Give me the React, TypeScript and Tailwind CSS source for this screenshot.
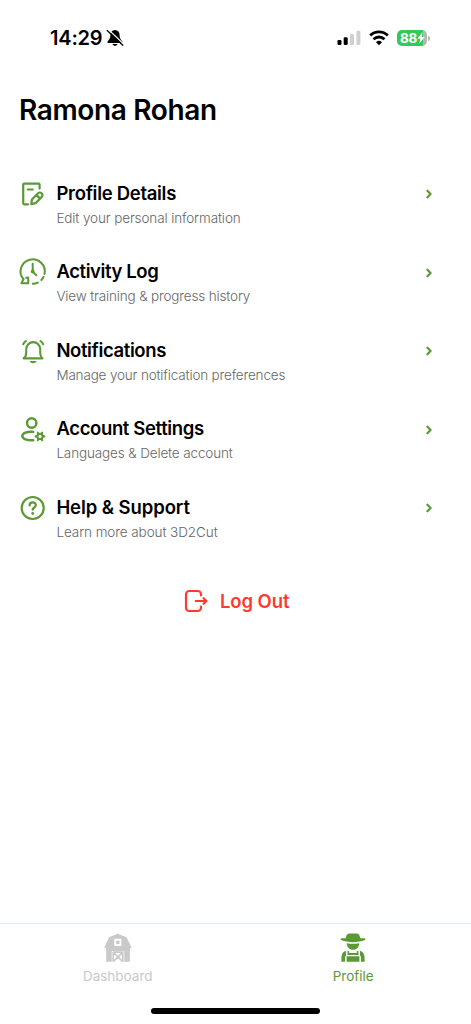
import React from 'react';

interface MenuItem {
  title: string;
  subtitle: string;
  titleClass: string;
  subtitleClass: string;
  icon: React.ReactNode;
}

const stroke = {
  fill: 'none',
  stroke: 'currentColor',
  strokeWidth: 2.2,
  strokeLinecap: 'round',
  strokeLinejoin: 'round',
} as const;

function EditIcon() {
  return (
    <svg viewBox="0 0 28 28" className="w-7 h-7" {...stroke}>
      <path d="M21.6 8.6V4.7a1 1 0 0 0-1-1H6.2a1 1 0 0 0-1 1v18.6a1 1 0 0 0 1 1H10" />
      <path d="M9.8 9.5h5" />
      <path d="m13.3 24.1.6-4.6 6.2-6.3a2.3 2.3 0 0 1 3.3 0l.4.4a2.3 2.3 0 0 1 0 3.3l-6.3 6.3zM18.6 15.1l3.3 3.3" />
    </svg>
  );
}

function HistoryIcon() {
  return (
    <svg viewBox="0 0 28 28" className="w-7 h-7 overflow-visible" {...stroke} strokeWidth={2}>
      <path d="M5.4 21.2A12.1 12.1 0 1 1 26.5 16" />
      <path d="M25.6 18.7a12.1 12.1 0 0 1-2.2 3.3M19.8 24.6a12.1 12.1 0 0 1-5 1.2" />
      <path d="M14.7 5.8v7.8l3.6 3.6" />
      <circle cx="14.7" cy="13.5" r="0.9" />
      <path d="M5.4 21.2 3.4 25.2h6.8v-5.6l-2 .2" />
    </svg>
  );
}

function BellIcon() {
  return (
    <svg viewBox="0 0 28 28" className="w-7 h-7" {...stroke} strokeWidth={2.1}>
      <path d="M5.6 21.4h18.8c-1.8-1.6-2.2-3-2.2-5.3v-4a7 7 0 0 0-14 0v4c0 2.300-.5 3.700-2.600 5.300z" />
      <path d="M12.4 24.5h5.4c-.9 1.5-4.5 1.5-5.4 0z" fill="currentColor" strokeWidth="1.2" />
      <path d="M5.200 7.200a9 9 0 0 1 2.700-3.200M25.200 7.200a9 9 0 0 0-2.700-3.200" />
    </svg>
  );
}

function UserCogIcon() {
  return (
    <svg viewBox="0 0 28 28" className="w-7 h-7" {...stroke} strokeWidth={2.4}>
      <circle cx="13.7" cy="8" r="4.7" />
      <path d="M15.3 16.9c-6.3-.6-11 1.4-11 4.2s4.4 4.3 11 4.100" />
      <circle cx="22" cy="21.4" r="2.6" strokeWidth="2.1" />
      <path
        d="m20.300 18.600-.5-1M23.700 18.600l.5-1M20.300 24.200l-.5 1M23.700 24.200l.5 1M18.700 21.400h-1M25.300 21.400h1"
        strokeWidth="2.1"
      />
    </svg>
  );
}

function HelpIcon() {
  return (
    <svg viewBox="0 0 28 28" className="w-7 h-7" {...stroke}>
      <circle cx="14.7" cy="14" r="11" />
      <path d="M11.6 11.5c0-4.200 6.400-4 6.200-.2-.1 2.200-3.100 2.200-3.100 4.400" />
      <circle cx="14.7" cy="19.5" r="1.4" fill="currentColor" stroke="none" />
    </svg>
  );
}

function LogOutIcon() {
  return (
    <svg viewBox="0 0 24 24" className="w-6 h-6" {...stroke}>
      <path d="M17 6.500V5.300a3.300 3.300 0 0 0-3.300-3.300H5.300A3.300 3.300 0 0 0 2 5.300v13.400A3.300 3.300 0 0 0 5.300 22h8.400a3.300 3.300 0 0 0 3.300-3.300v-1.200" />
      <path d="M11.7 12h10.600M19.600 9.200l2.800 2.800-2.800 2.800" />
    </svg>
  );
}

function BarnIcon() {
  return (
    <svg viewBox="0 0 28 29" className="w-7 h-[29px]">
      <path
        fill="currentColor"
        fillRule="evenodd"
        d="M13.6.7 22.5 4.2 25 9.300l2.700 5.600H25.900V28.800H2.200V14.900H.2L2.800 9.300l2.300-5.100zM10.200 5.700v7.200h7.200V5.700zM7.700 18v10.800h12.600V18z"
      />
      <path fill="currentColor" d="M12.200 7.700h3.300v3.300h-3.300z" />
      <path
        d="M9.200 19.100h9.600v9.700M9.200 19.100v9.700M9.200 19.100l9.600 9.600M18.800 19.100l-9.600 9.600"
        fill="none"
        stroke="currentColor"
        strokeWidth="1.6"
      />
    </svg>
  );
}

function FarmerIcon() {
  return (
    <svg viewBox="0 0 26 29" className="w-[26px] h-[29px]" fill="currentColor">
      <path d="M5.600 5.200 6.600 2.200C7.200.4 9.400.3 13 .5c3.600-.2 5.800-.1 6.400 1.700l1 3h4c1.300 0 1.500 1.300.4 1.900C18.600 9.800 7.400 9.800 1.200 7.100.1 6.500.3 5.200 1.600 5.200z" />
      <path d="M6.800 10.200q6.200 1 12.400 0c0 3.800-2.700 6.500-6.200 6.500S6.800 14 6.800 10.200z" />
      <path d="M6 17.700v4.800q-1 .7-1 2v4.300H1.400v-3.600c0-4 1.400-6.700 4.600-7.500zM20 17.700v4.800q1 .7 1 2v4.300h3.600v-3.600c0-4-1.400-6.700-4.600-7.500z" />
      <path d="M7.500 17.800q.9.200 1.700.6v1.700h7.600v-1.700q.8-.4 1.700-.6v4.300h-11zM6.600 23.300h12.800v5.500H6.600z" />
    </svg>
  );
}

function MutedBellIcon() {
  return (
    <svg viewBox="0 0 18 18" className="w-[18px] h-[18px]">
      <path
        d="M9 1C6 1 4.4 3.200 4.400 6c0 4-1.600 4.800-2.800 6.500-.5.8 0 1.400.7 1.400h13.400c.7 0 1.200-.6.7-1.400C15.200 10.800 13.600 10 13.600 6c0-2.800-1.600-5-4.600-5zM6.500 14.900c.6 2.400 4.400 2.400 5 0z"
        fill="black"
      />
      <path d="M2.700.9 18.400 15.700" stroke="white" strokeWidth="1.3" />
      <path d="M1.200 1.500 16.800 16.200" stroke="black" strokeWidth="1.300" strokeLinecap="round" />
    </svg>
  );
}

function StatusBar() {
  return (
    <header className="h-[76px] pl-[50px] pr-[41px] flex items-center justify-between">
      <div className="flex items-center gap-1">
        <span className="text-[20px] font-semibold tracking-[-0.2px] leading-6">14:29</span>
        <MutedBellIcon />
      </div>
      <div className="flex items-center">
        <svg viewBox="0 0 24 16" className="w-6 h-4">
          <rect x="0.500" y="10" width="4" height="5" rx="1.200" />
          <rect x="6.700" y="7.300" width="4" height="7.700" rx="1.200" />
          <rect x="13" y="4" width="4" height="11" rx="1.200" fill="#d0d0d0" />
          <rect x="19.400" y="0.800" width="4" height="14.200" rx="1.200" fill="#d0d0d0" />
        </svg>
        <svg viewBox="0 0 20 16" className="w-5 h-4 ml-2" fill="none" stroke="black" strokeWidth="2.8">
          <path d="M1.200 5.500a12.600 12.600 0 0 1 17.600 0M4.500 9.200a8 8 0 0 1 11 0" />
          <path d="m10 15.300-3-3.100a4.300 4.300 0 0 1 6 0z" fill="black" stroke="none" />
        </svg>
        <div className="ml-2 w-[30px] h-4 rounded-[5px] overflow-hidden bg-linear-to-r from-[#34c759] from-88% to-[#b5b5b5] to-88% flex items-center pl-[3px]">
          <span className="text-white text-[13.5px] font-bold leading-4 tracking-[-0.3px]">88</span>
          <svg viewBox="0 0 8 12" className="w-2 h-3 shrink-0" fill="white">
            <path d="M5.600.3.3 6.800h3.100L2.300 11.700 7.800 5H4.600z" />
          </svg>
        </div>
        <span className="ml-px w-[2px] h-[5px] rounded-r-full bg-[#b5b5b5]" />
      </div>
    </header>
  );
}

const menuItems: MenuItem[] = [
  {
    title: 'Profile Details',
    subtitle: 'Edit your personal information',
    titleClass: 'tracking-[-0.3px]',
    subtitleClass: 'tracking-[-0.12px]',
    icon: <EditIcon />,
  },
  {
    title: 'Activity Log',
    subtitle: 'View training & progress history',
    titleClass: 'tracking-[-0.4px]',
    subtitleClass: 'tracking-[-0.16px]',
    icon: <HistoryIcon />,
  },
  {
    title: 'Notifications',
    subtitle: 'Manage your notification preferences',
    titleClass: 'tracking-[-0.38px]',
    subtitleClass: 'tracking-[-0.17px]',
    icon: <BellIcon />,
  },
  {
    title: 'Account Settings',
    subtitle: 'Languages & Delete account',
    titleClass: 'tracking-[-0.36px]',
    subtitleClass: 'tracking-[-0.14px]',
    icon: <UserCogIcon />,
  },
  {
    title: 'Help & Support',
    subtitle: 'Learn more about 3D2Cut',
    titleClass: 'tracking-[-0.08px]',
    subtitleClass: 'tracking-[-0.08px]',
    icon: <HelpIcon />,
  },
];

function MenuRow({ item }: { item: MenuItem }) {
  return (
    <li className="h-[78.5px]">
      <button className="w-full flex items-start text-left">
        <span className="shrink-0 text-[#5a9a35]">{item.icon}</span>
        <span className="flex-1 pl-[10.4px] whitespace-nowrap">
          <span className={`block text-[18.5px] leading-[26px] font-semibold ${item.titleClass}`}>{item.title}</span>
          <span className={`block text-[13.5px] leading-6 font-light text-[#666666] ${item.subtitleClass}`}>{item.subtitle}</span>
        </span>
        <svg viewBox="0 0 8 10" className="w-2 h-[10px] mt-[9.5px] text-[#5a9a35]" {...stroke}>
          <path d="M2.400 1.700 5.600 5 2.400 8.300" />
        </svg>
      </button>
    </li>
  );
}

export default function App() {
  return (
    <div className="w-full h-[1024px] flex flex-col bg-white text-black font-['Inter',sans-serif] overflow-hidden">
      <StatusBar />

      <main className="flex-1 flex flex-col">
        <h1 className="pl-[19px] mt-4 text-[28px] leading-9 font-semibold tracking-[-0.36px]">Ramona Rohan</h1>

        <ul className="mt-[51.9px] pl-[18px] pr-[38px]">
          {menuItems.map((item) => (
            <MenuRow key={item.title} item={item} />
          ))}
        </ul>

        {/* Log out */}
        <button className="mt-[16.5px] ml-[184px] flex items-center text-[#fb3b30]">
          <LogOutIcon />
          <span className="ml-3 text-[18.5px] leading-6 font-semibold tracking-[-0.1px]">Log Out</span>
        </button>
      </main>

      {/* Bottom navigation */}
      <footer className="h-[101px] border-t border-[#e3e8ec]">
        <nav className="grid grid-cols-2 h-[84px]">
          <button className="flex flex-col items-center pt-[9px] text-[#c9c9c9]">
            <BarnIcon />
            <span className="mt-1 text-[13.5px] leading-5">Dashboard</span>
          </button>
          <button className="flex flex-col items-center pt-[9px] text-[#5a9a35]">
            <FarmerIcon />
            <span className="mt-1 text-[13.5px] leading-5">Profile</span>
          </button>
        </nav>
        <div className="mx-auto w-[169px] h-[6px] rounded-full bg-black" />
      </footer>
    </div>
  );
}
